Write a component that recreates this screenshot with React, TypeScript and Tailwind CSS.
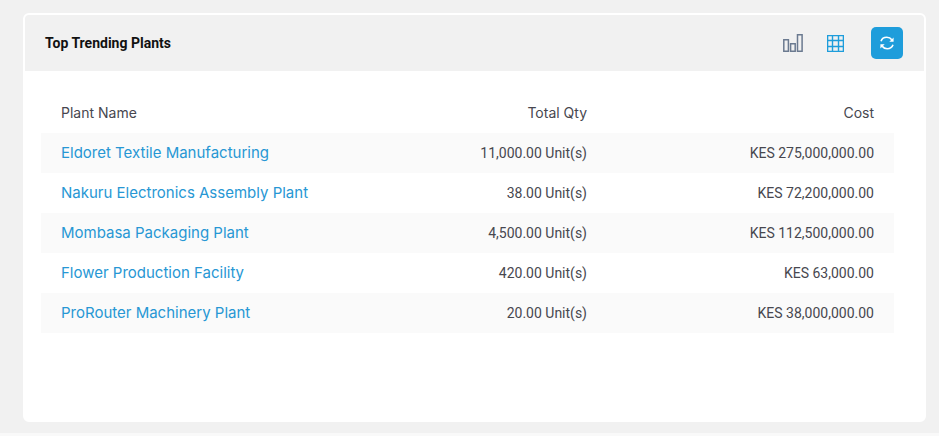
type Plant = {
  name: string;
  qty: string;
  cost: string;
};

const plants: Plant[] = [
  { name: 'Eldoret Textile Manufacturing', qty: '11,000.00 Unit(s)', cost: 'KES 275,000,000.00' },
  { name: 'Nakuru Electronics Assembly Plant', qty: '38.00 Unit(s)', cost: 'KES 72,200,000.00' },
  { name: 'Mombasa Packaging Plant', qty: '4,500.00 Unit(s)', cost: 'KES 112,500,000.00' },
  { name: 'Flower Production Facility', qty: '420.00 Unit(s)', cost: 'KES 63,000.00' },
  { name: 'ProRouter Machinery Plant', qty: '20.00 Unit(s)', cost: 'KES 38,000,000.00' },
];

function ChartIcon() {
  return (
    <svg width="20" height="18" viewBox="0 0 20 18" fill="none" stroke="#6b7a90" strokeWidth="1.5" aria-hidden="true">
      <path d="M.8 5.7h4.6v11.5H.8zM7.6 9.7h4.6v7.5H7.6zM14.5.8h4.6v16.4h-4.6z" />
    </svg>
  );
}

function GridIcon() {
  return (
    <svg width="17" height="17" viewBox="0 0 17 17" fill="none" stroke="#1e9ddb" strokeWidth="1.4" aria-hidden="true">
      <path d="M.6.6h15.8v15.8H.6zM.6 5.5h15.8M.6 11.5h15.8M5.5.6v15.8M11.5.6v15.8" />
    </svg>
  );
}

function RefreshIcon() {
  return (
    <svg width="14" height="14" viewBox="0 0 14 14" fill="none" stroke="#fff" strokeWidth="1.6" aria-hidden="true">
      <path d="M1 5.2C1.8 2.8 4.1 1.3 6.8 1.3c2.1 0 3.9.9 5 2.5M13 8.8c-.8 2.4-3.1 3.9-5.8 3.9-2.1 0-3.9-.9-5-2.5" />
      <path d="M13.6 1.4v4.3H9.3zM.4 12.6V8.3h4.3z" fill="#fff" stroke="none" />
    </svg>
  );
}

export default function App() {
  return (
    <div className="min-h-screen bg-[#f9f9f9] font-['Roboto',sans-serif] text-sm text-[#47474f]">
      <main className="bg-[#f1f1f1] pt-[13px] pr-[13px] pb-[11px] pl-[23px]">
        <section className="min-h-[409px] rounded-md border-2 border-white bg-white">
          <header className="flex h-14 items-center justify-between rounded-t bg-[#f1f1f1] pr-[21px] pl-5">
            <h2 className="font-bold text-[#111]">Top Trending Plants</h2>
            <div className="flex items-center">
              <button type="button" aria-label="Chart view" className="mr-6">
                <ChartIcon />
              </button>
              <button type="button" aria-label="Table view" className="mr-[27px]">
                <GridIcon />
              </button>
              <button
                type="button"
                aria-label="Refresh"
                className="flex size-8 items-center justify-center rounded-[5px] bg-[#1e9ddb]"
              >
                <RefreshIcon />
              </button>
            </div>
          </header>
          <div className="pt-[22px] pr-[30px] pl-4">
            <table className="w-full table-fixed">
              <thead className="font-['Inter',sans-serif]">
                <tr className="h-10">
                  <th className="w-[38%] px-5 text-left font-normal">Plant Name</th>
                  <th className="px-5 text-right font-normal">Total Qty</th>
                  <th className="w-[287px] px-5 text-right font-normal">Cost</th>
                </tr>
              </thead>
              <tbody>
                {plants.map((plant) => (
                  <tr key={plant.name} className="h-10 odd:bg-[#fafafa]">
                    <td className="px-5 font-['Inter',sans-serif] text-[15px] whitespace-nowrap">
                      <a href="#" className="text-[#2797d4]">
                        {plant.name}
                      </a>
                    </td>
                    <td className="px-5 text-right whitespace-nowrap">{plant.qty}</td>
                    <td className="px-5 text-right whitespace-nowrap">{plant.cost}</td>
                  </tr>
                ))}
              </tbody>
            </table>
          </div>
        </section>
      </main>
    </div>
  );
}
